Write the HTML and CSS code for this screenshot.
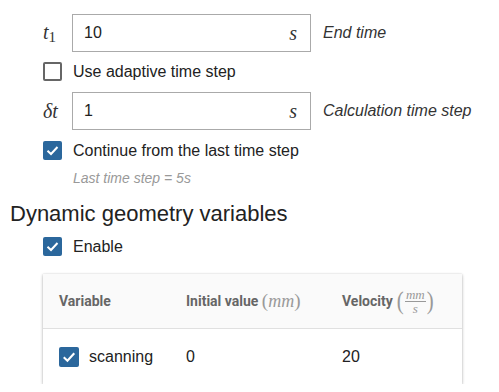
FILE: index.html
```html
<!DOCTYPE html>
<html>
<head>
<meta charset="utf-8">
<link rel="stylesheet" href="styles.css">
</head>
<body>
<div class="form">
  <div class="field">
    <span class="label"><i class="math">t</i><span class="sub">1</span></span>
    <div class="input"><span class="val">10</span><i class="math unit">s</i></div>
    <span class="desc">End time</span>
  </div>
  <div class="check-row first">
    <span class="cb"></span><span class="cb-text">Use adaptive time step</span>
  </div>
  <div class="field second">
    <span class="label"><i class="math">δt</i></span>
    <div class="input"><span class="val">1</span><i class="math unit">s</i></div>
    <span class="desc">Calculation time step</span>
  </div>
  <div class="check-row third">
    <span class="cb checked"><svg viewBox="0 0 19 19" width="19" height="19"><path d="M4.5 9.8 L8 13 L14.5 6" fill="none" stroke="#fff" stroke-width="2"/></svg></span><span class="cb-text">Continue from the last time step</span>
  </div>
  <div class="hint">Last time step = 5s</div>
</div>
<h2 class="heading">Dynamic geometry variables</h2>
<div class="section">
  <div class="check-row">
    <span class="cb checked"><svg viewBox="0 0 19 19" width="19" height="19"><path d="M4.5 9.8 L8 13 L14.5 6" fill="none" stroke="#fff" stroke-width="2"/></svg></span><span class="cb-text">Enable</span>
  </div>
  <div class="card">
    <div class="trow thead">
      <div class="hcell">Variable</div>
      <div class="hcell">Initial value <span class="paren">(</span><i class="math hm">mm</i><span class="paren">)</span></div>
      <div class="hcell">Velocity <span class="bigparen">(</span><span class="frac"><i class="math num">mm</i><i class="math den">s</i></span><span class="bigparen">)</span></div>
    </div>
    <div class="trow tbody">
      <div class="cellcheck"><span class="cb checked"><svg viewBox="0 0 19 19" width="19" height="19"><path d="M4.5 9.8 L8 13 L14.5 6" fill="none" stroke="#fff" stroke-width="2"/></svg></span><span class="cb-text">scanning</span></div>
      <div>0</div>
      <div>20</div>
    </div>
  </div>
</div>
</body>
</html>
```
FILE: styles.css
```css
html, body { margin: 0; padding: 0; background: #fff; }
body { font-family: "Liberation Sans", Arial, sans-serif; color: #222; }
.form { padding: 14px 0 0 43px; }
.field { display: flex; align-items: center; height: 38px; }
.field.second { margin-top: 11px; }
.label { width: 29px; font-size: 20px; color: #333; }
.math { font-family: "Liberation Serif", "DejaVu Serif", serif; font-style: italic; }
.sub { font-family: "Liberation Serif", serif; font-size: 15px; vertical-align: -3px; }
.input { box-sizing: border-box; width: 239px; height: 38px; border: 1px solid #aaa; display: flex; align-items: center; justify-content: space-between; padding: 0 13px 0 11px; font-size: 16px; }
.unit { font-size: 20px; color: #333; }
.desc { margin-left: 12px; font-style: italic; font-size: 16px; color: #333; }
.check-row { display: flex; align-items: center; height: 19px; }
.check-row.first { margin-top: 10px; }
.check-row.third { margin-top: 11px; }
.cb { box-sizing: border-box; width: 19px; height: 19px; border: 2px solid #666; border-radius: 2px; flex: none; }
.cb.checked { border: none; background: #2b679c; }
.cb svg { display: block; }
.cb-text { margin-left: 11px; font-size: 16px; color: #222; }
.hint { margin: 10px 0 0 30px; font-size: 14px; line-height: 16px; font-style: italic; color: #999; }
.heading { margin: 15px 0 0 10px; font-size: 22px; line-height: 26px; font-weight: normal; color: #222; }
.section { padding: 10px 0 0 43px; }
.card { margin-top: 18px; width: 419px; box-shadow: 0 1px 3px rgba(0,0,0,0.3), 0 0 1px rgba(0,0,0,0.12); }
.trow { display: grid; grid-template-columns: 127px 156px 1fr; align-items: center; padding-left: 16px; }
.thead { height: 54px; background: #fafafa; border-bottom: 1px solid #e0e0e0; font-family: Roboto, "Liberation Sans", sans-serif; font-weight: bold; font-size: 14px; color: #666; }
.hcell { display: flex; align-items: center; white-space: pre; }
.tbody { height: 55px; font-size: 16px; color: #222; }
.cellcheck { display: flex; align-items: center; }
.cellcheck .cb { width: 20px; height: 20px; }
.cellcheck .cb svg { width: 20px; height: 20px; }
.cellcheck .cb-text { margin-left: 10px; }
.paren { font-family: "Liberation Serif", serif; font-weight: normal; font-size: 19px; color: #999; }
.hm { font-weight: normal; font-size: 18px; color: #999; }
.bigparen { font-family: "Liberation Serif", serif; font-weight: normal; font-size: 26px; line-height: 26px; color: #999; transform: scaleX(0.8); }
.frac { display: inline-flex; flex-direction: column; align-items: center; font-weight: normal; color: #999; margin-top: 2px; }
.frac .num { font-size: 13px; line-height: 11px; border-bottom: 1px solid #999; padding: 0 1px 1px; }
.frac .den { font-size: 13px; line-height: 13px; }
```
